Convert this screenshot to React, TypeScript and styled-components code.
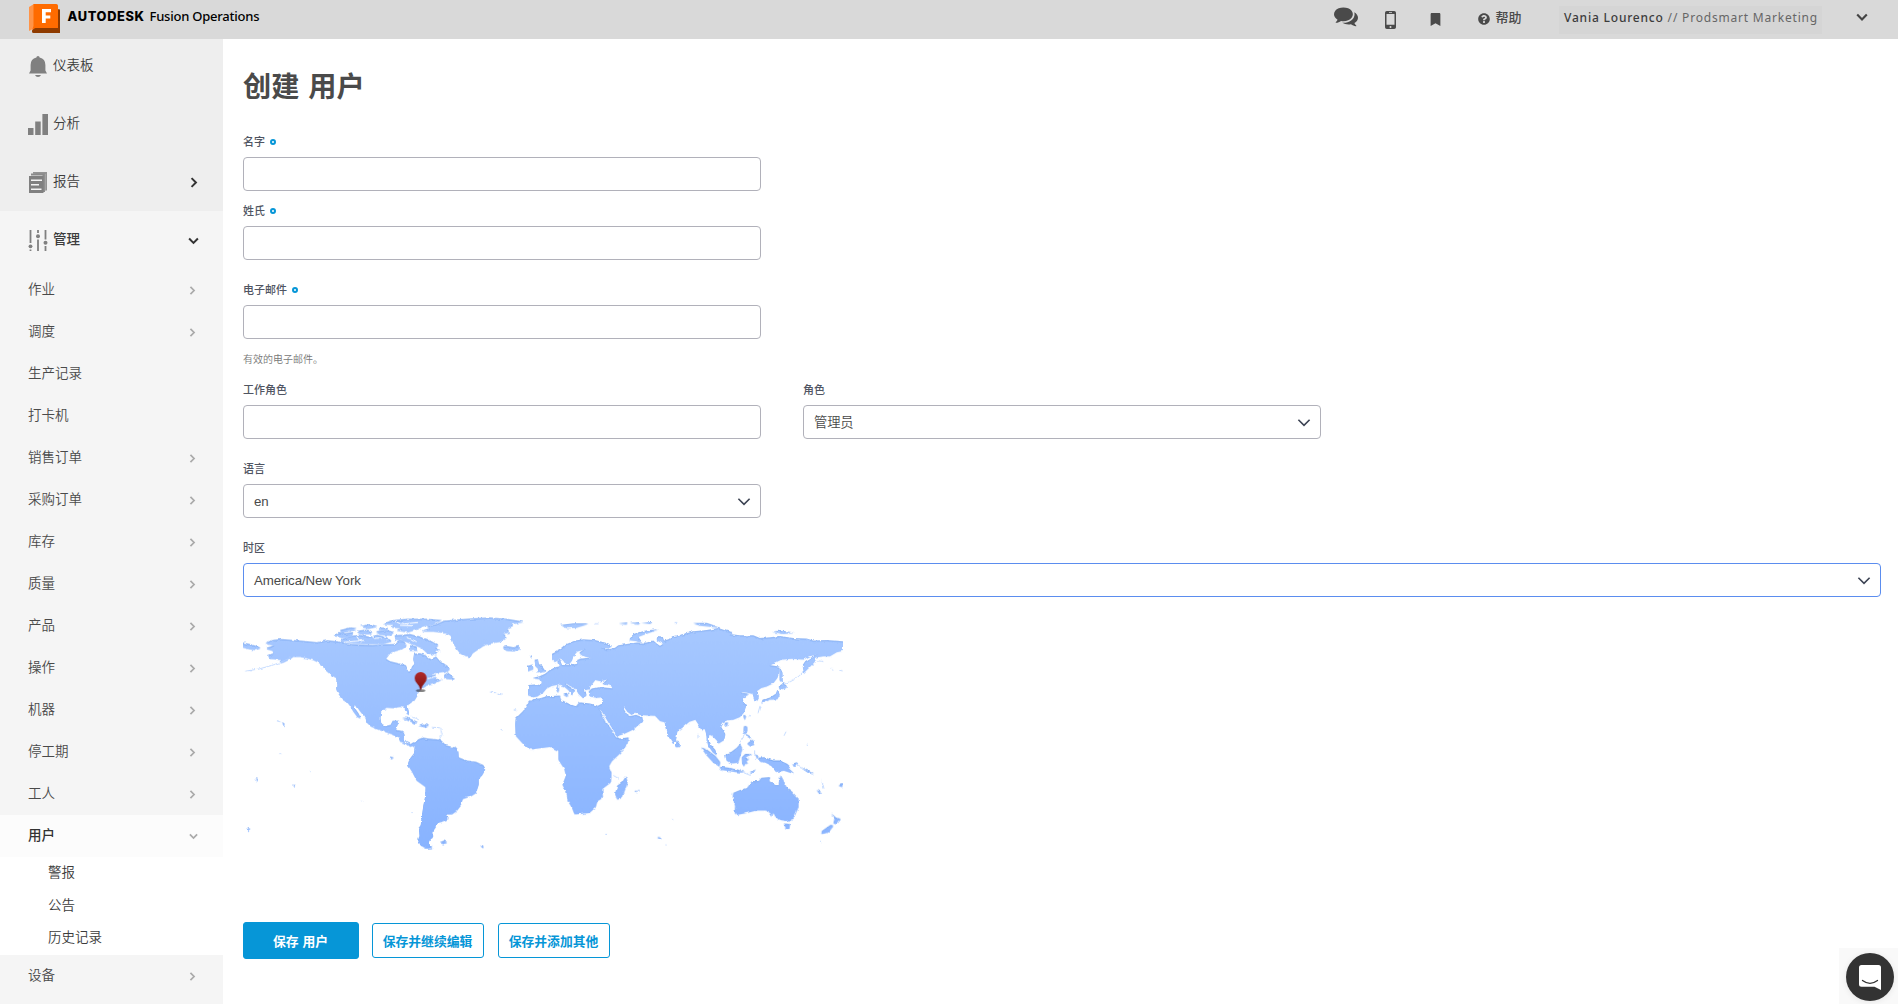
import React from 'react';
import styled, { createGlobalStyle } from 'styled-components';
import { FaBookmark, FaQuestionCircle } from 'react-icons/fa';

const cjk = `"Noto Sans CJK SC", sans-serif`;

const GlobalStyle = createGlobalStyle`
  *, *::before, *::after { box-sizing: border-box; }
  body {
    margin: 0;
    background: #fff;
    color: #4a4a4a;
    font-family: "Liberation Sans", ${cjk};
    overflow: hidden;
  }
`;

const Page = styled.div`
  display: flex;
  flex-direction: column;
  width: 100%;
  height: 1004px;
  overflow: hidden;
`;

/* ---------- Header ---------- */

const Header = styled.header`
  display: flex;
  align-items: center;
  justify-content: space-between;
  flex: none;
  height: 39px;
  padding: 0 30px 0 28px;
  background: #d9d9d9;
`;

const Brand = styled.div`
  display: flex;
  align-items: center;
  height: 39px;
  padding-bottom: 2px;
`;

const BrandName = styled.span`
  width: 82px;
  margin: -4px 0 0 6.5px;
  color: #000;
  font: 800 12.8px/18px Inter, sans-serif;
  letter-spacing: 0.65px;
`;

const ProductName = styled.span`
  margin: -5px 0 0 0;
  color: #000;
  font: 500 13px/18px "Noto Sans", sans-serif;
  letter-spacing: -0.22px;
`;

const HeaderTools = styled.div`
  display: flex;
  align-items: center;
  height: 39px;
  color: #4a4a4a;
`;

const ToolIcon = styled.span<{ $gap: number; $drop?: number }>`
  display: flex;
  margin: ${(p) => p.$drop ?? 0}px ${(p) => p.$gap}px 0 0;
`;

const HelpText = styled.span`
  margin: -6px 37.5px 0 0;
  font: 500 13px/20px ${cjk};
`;

const Account = styled.div`
  display: flex;
  align-items: center;
  width: 263px;
  height: 28px;
  margin-right: 34px;
  padding: 0 0 3px 5px;
  background: #d5d5d5;
  color: #666;
  font: 400 12px/18px "Noto Sans", sans-serif;
  letter-spacing: 0.8px;
  white-space: pre;
`;

const AccountName = styled.span`
  color: #3c3c3c;
  font-weight: 500;
`;

/* ---------- Sidebar ---------- */

const Body = styled.div`
  display: flex;
  flex: 1;
  min-height: 0;
`;

const Sidebar = styled.nav`
  flex: none;
  width: 223px;
  background: #f5f5f5;
  font-family: ${cjk};
  font-size: 13.5px;
  overflow: hidden;
`;

const MainItems = styled.div`
  background: #eee;
  & > :first-child { height: 56px; padding-bottom: 6px; }
`;

const MainItem = styled.div<{ $open?: boolean }>`
  display: grid;
  grid-template-columns: 25px 1fr 12px;
  align-items: center;
  justify-items: start;
  height: 58px;
  padding: 0 23.5px 4px 28px;
  color: #3c3c3c;
  font-weight: ${(p) => (p.$open ? 500 : 350)};
  svg { margin-top: 5px; }
  svg:last-child:not(:first-child) { justify-self: center; }
`;

const SubItem = styled.div<{ $open?: boolean }>`
  display: flex;
  align-items: center;
  justify-content: space-between;
  height: 42px;
  padding: 0 ${(p) => (p.$open ? 25 : 29)}px 4px 28px;
  background: ${(p) => (p.$open ? '#fcfcfc' : 'transparent')};
  color: ${(p) => (p.$open ? '#333' : '#4a4a4a')};
  font-weight: ${(p) => (p.$open ? 500 : 350)};
  svg { margin-top: 5px; }
`;

const LeafGroup = styled.div`
  height: 98px;
  background: #fff;
`;

const Leaf = styled.div`
  height: 32.6px;
  padding-left: 48px;
  color: #3c3c3c;
  font-weight: 350;
  line-height: 28px;
`;

/* ---------- Form ---------- */

const Main = styled.main`
  display: flex;
  flex-direction: column;
  flex: 1;
  padding: 30px 17px 0 20px;
`;

const Title = styled.h1`
  margin: 0;
  color: #4a4a4a;
  font: 700 28.2px/32px ${cjk};
  height: 34px;
  word-spacing: 2.5px;
`;

const Field = styled.div<{ $top: number; $wide?: boolean }>`
  width: ${(p) => (p.$wide ? '100%' : '518px')};
  margin-top: ${(p) => p.$top}px;
`;

const Label = styled.label`
  display: flex;
  align-items: center;
  height: 16px;
  margin-bottom: 7px;
  color: #505562;
  font: 500 11px/16px ${cjk};
`;

const LabelText = styled.span`
  margin-top: -2px;
`;

const Required = styled.i`
  width: 6px;
  height: 6px;
  margin-left: 5px;
  border: 2px solid #0696d7;
  border-radius: 50%;
`;

const Control = styled.div<{ $focus?: boolean }>`
  display: flex;
  align-items: center;
  justify-content: space-between;
  height: 34px;
  padding: 1px 9px 0 10px;
  border: 1px solid ${(p) => (p.$focus ? '#5b8def' : '#b1b1ba')};
  border-radius: 4px;
  background: #fff;
  color: #4a4a4a;
  font: 350 13.3px/20px "Liberation Sans", ${cjk};
  letter-spacing: -0.12px;
`;

const Help = styled.p`
  height: 16px;
  margin: 12px 0 0;
  color: #777;
  font: 350 10px/16px ${cjk};
`;

const FieldRow = styled.div`
  display: flex;
  gap: 42px;
`;

const MapBox = styled.div`
  width: 600px;
  height: 300px;
  margin-top: 11px;
`;

const Actions = styled.div`
  display: flex;
  align-items: center;
  margin-top: 14px;
`;

const Button = styled.button<{ $primary?: boolean }>`
  display: flex;
  align-items: center;
  justify-content: center;
  width: ${(p) => (p.$primary ? 116 : 112)}px;
  height: ${(p) => (p.$primary ? 37 : 35)}px;
  margin: 0 ${(p) => (p.$primary ? 13 : 14)}px 0 0;
  padding: 0 1px 0 0;
  border: 1px solid #0696d7;
  border-radius: 3px;
  background: ${(p) => (p.$primary ? '#0696d7' : '#fff')};
  color: ${(p) => (p.$primary ? '#fff' : '#0696d7')};
  font: 700 12.8px/18px ${cjk};
  word-spacing: 1px;
  white-space: nowrap;
`;

const Launcher = styled.div`
  position: absolute;
  left: 1839px;
  top: 948px;
  display: flex;
  align-items: center;
  justify-content: center;
  width: 59px;
  height: 56px;
  padding: 2px 0 0 3px;
  background: #f9f9f9;
`;

const LauncherDisc = styled.div`
  display: flex;
  align-items: center;
  justify-content: center;
  flex: none;
  width: 48px;
  height: 48px;
  border-radius: 50%;
  background: #333;
  box-shadow: 0 1px 6px rgba(0, 0, 0, 0.08);
`;

/* ---------- Icons ---------- */

const Chevron = ({ down, color, size, weight }: { down?: boolean; color: string; size: number; weight: number }) => (
  <svg
    width={down ? size * 2 : size}
    height={down ? size : size * 2}
    viewBox={down ? '0 0 20 10' : '0 0 10 20'}
    fill="none"
    stroke={color}
    strokeWidth={weight}
    overflow="visible"
  >
    <path d={down ? 'M2 1l8 8 8-8' : 'M1 2l8 8-8 8'} />
  </svg>
);

const BrandMark = () => (
  <svg width="33" height="29" viewBox="0 0 33 29">
    <path d="M1 3L6 0v24.500L1 27z" fill="#ff9448" />
    <path d="M4 26.500L7 23h22V5l3 .5V29H5.500Q4 29 4 27.500z" fill="#8f3b00" />
    <path d="M5.500 0h22.700Q30 0 30 1.800V24H7.500Q5 24.500 4 26.500L5.500 22z" fill="#ff6b00" />
    <path d="M14 5h9v3.200h-5.300v3.200h4.600v3.100h-4.600V19H14z" fill="#fff" />
  </svg>
);

const CommentsIcon = () => (
  <svg width="24" height="24" viewBox="0 0 1792 1792" fill="#4a4a4a">
    <path d="M1408 768q0 139-94 257t-256.500 186.500-353.500 68.500q-86 0-176-16-124 88-278 128-36 9-86 16h-3q-11 0-20.500-8t-11.500-21q-1-3-1-6.500t.5-6.500 2-6l2.500-5 3.500-5.500 4-5 4.500-5 4-4.500q5-6 23-25t26-29.500 22.500-29 25-38.500 20.500-44q-124-72-195-177t-71-224q0-139 94-257t256.500-186.500 353.500-68.500 353.500 68.500 256.500 186.500 94 257zm384 256q0 120-71 224.500t-195 176.500q10 24 20.500 44t25 38.500 22.500 29 26 29.500 23 25q1 1 4 4.500t4.500 5 4 5 3.500 5.500l2.500 5 2 6 .5 6.500-1 6.500q-3 14-13 22t-22 7q-50-7-86-16-154-40-278-128-90 16-176 16-271 0-472-132 58 4 88 4 161 0 309-45t264-129q125-92 192-212t67-254q0-77-23-152 129 71 204 178t75 230z" />
  </svg>
);

const PhoneIcon = () => (
  <svg width="11" height="18" viewBox="0 0 11 18">
    <path
      fillRule="evenodd"
      fill="#4a4a4a"
      d="M1.800 0h7.400Q11 0 11 1.800v14.400Q11 18 9.200 18H1.800Q0 18 0 16.200V1.800Q0 0 1.800 0zM1.500 3v10.800h8V3zM4 1.200v.7h3v-.7zM5.500 15a1 1 0 1 0 0 2 1 1 0 0 0 0-2z"
    />
  </svg>
);

const BellIcon = () => (
  <svg width="20" height="22" viewBox="0 0 20 22" fill="#808080">
    <path d="M10 0q1.600 0 1.600 1.500 5.800 1.300 5.800 7.500v5.500l1.600 3H1l1.600-3V9Q2.600 2.800 8.400 1.500 8.400 0 10 0zM7 19h6q-.8 2-3 2t-3-2z" />
  </svg>
);

const BarsIcon = () => (
  <svg width="20" height="22" viewBox="0 0 20 22" fill="#808080">
    <path d="M0 14h5.500v7H0zM7.200 7.500h5.500V21H7.200zM14.400 0H20v21h-5.600z" />
  </svg>
);

const ReportIcon = () => (
  <svg width="20" height="22" viewBox="0 0 20 22">
    <path d="M5 1.800V0h14v18.500h-2.500V2.500z" fill="#949494" />
    <path d="M3 3.500V1.500h14V20h-2.500V3.500z" fill="#8a8a8a" />
    <path d="M17.300 2v17" stroke="#bdbdbd" strokeWidth="0.500" />
    <path d="M1 4h14.500v17H1z" fill="#808080" />
    <path d="M3 8.300h11M3 12.700h8M3 17.300h10.500" stroke="#f4f4f4" strokeWidth="1.400" />
  </svg>
);

const SlidersIcon = () => (
  <svg width="20" height="22" viewBox="0 0 20 22" fill="none" stroke="#808080" strokeWidth="1.800">
    <path d="M2.500 0v13M2.500 19.500V21M10 0v3M10 9.500V21M17.500 0v9.500M17.500 16v5" />
    <g fill="#808080" stroke="none">
      <circle cx="2.500" cy="16.300" r="1.900" />
      <circle cx="10" cy="6.300" r="2" />
      <circle cx="17.500" cy="12.800" r="2" />
    </g>
  </svg>
);

const LauncherIcon = () => (
  <svg width="22" height="25" viewBox="0 0 22 25">
    <path d="M2.500 0h17Q22 0 22 2.500V25l-6.500-3.200h-13Q0 21.800 0 19.300V2.500Q0 0 2.500 0z" fill="#fff" />
    <path d="M3.500 15.500q7.500 5.600 15 0" fill="none" stroke="#333" strokeWidth="1.300" strokeLinecap="round" />
  </svg>
);

/* ---------- World map ---------- */

const WEST_LAND = [
  'M9 128L30 132 45 137 62 143 48 148 30 146 9 140Z',
  'M76 130L95 120 125 117 160 120 195 123 232 127 262 121 290 124 310 127 335 132 360 134 400 135 430 133 465 132 478 122 492 124 500 136 486 146 470 150 455 154 447 162 437 176 450 184 475 190 498 196 503 210 512 213 516 200 524 192 520 178 522 162 540 160 556 166 572 178 588 170 600 184 618 198 630 207 615 216 595 219 575 221 560 230 572 226 588 226 583 238 606 238 582 250 560 256 550 262 540 270 531 276 533 285 524 300 508 310 502 316 505 330 508 345 500 340 494 322 480 319 460 323 440 322 424 332 421 355 424 372 436 380 452 376 458 364 478 364 470 380 468 392 488 394 494 406 490 420 500 430 512 434 522 428 528 434 518 438 508 440 494 428 480 424 476 412 460 403 435 395 415 388 392 378 380 366 376 352 360 332 350 318 340 314 345 326 356 342 362 355 352 350 340 334 330 316 322 306 308 298 298 284 289 268 290 240 288 232 272 222 256 208 248 196 236 186 220 178 200 172 178 168 160 168 150 176 130 186 118 188 125 178 108 176 90 174 84 166 100 160 98 150 76 144 92 140 104 134Z',
  'M524 430L535 420 548 415 566 418 590 420 604 424 618 438 645 444 655 456 656 474 680 484 708 488 730 498 736 508 728 524 716 538 716 556 708 580 695 588 668 598 664 616 650 634 636 644 620 644 626 658 606 666 594 670 588 682 576 700 580 712 568 724 564 736 578 746 560 748 542 738 532 720 536 712 534 690 542 680 546 650 550 620 556 590 557 562 530 542 516 515 504 496 510 478 522 462 524 444Z',
  'M545 92L570 84 560 78 590 72 612 62 650 58 700 54 750 52 800 56 850 64 812 70 820 78 800 86 808 94 790 100 800 112 784 122 750 128 730 136 712 148 698 158 690 172 676 168 660 158 650 144 640 128 632 104 610 96 580 92Z',
  'M788 142L800 138 820 142 836 138 840 146 820 152 800 150Z',
  'M428 70L460 60 500 56 560 56 606 60 580 70 550 76 530 86 505 94 470 90 486 82 455 80 462 72Z',
  'M284 106L296 96 316 100 340 96 336 106 310 112Z',
  'M300 90L330 82 350 84 330 92 304 96Z',
  'M304 118L330 108 360 104 384 110 410 104 440 112 455 122 430 130 380 130 340 128 310 124Z',
  'M350 92L380 88 398 94 388 100 360 100Z',
  'M360 78L390 72 412 78 386 84Z',
  'M408 94L440 90 462 96 450 104 420 102Z',
  'M420 82L446 84 440 89 416 88Z',
  'M464 106L490 104 510 102 540 110 564 118 596 136 585 140 602 152 584 148 590 164 560 156 545 142 520 132 500 124 486 120 466 116Z',
  'M510 136L530 140 532 150 512 150Z',
  'M612 226L626 216 634 228 646 236 630 236 614 234Z',
  'M486 355L505 355 520 362 534 368 524 370 506 361Z',
  'M534 377L550 372 568 378 558 382Z',
  'M600 730L612 726 622 730 610 734Z',
  'M720 739L730 741 730 747Z',
  'M126 368L134 372 132 378Z',
  'M448 472L462 474 454 478Z',
  'M43 538L54 539 50 543ZM156 557L166 559 162 563ZM22 688L32 690 26 694Z',
  'M884 180L894 178 896 192 908 202 916 214 888 218 896 206 886 196Z',
  'M864 198L878 194 880 206 864 212Z',
  'M870 170L876 166 876 172Z',
];

const EAST_LAND = [
  'M-35 256L-10 254 0 256 3 246-2 236-22 234-2 230 15 222 30 210 48 202 58 200 52 184 60 180 66 196 90 196 112 192 112 180 125 176 158 172 130 166 118 158 135 146 112 152 100 166 96 180 88 190 78 192 70 180 60 176 45 184 36 176 36 162 60 150 80 132 105 122 130 118 165 120 195 128 216 136 205 144 180 140 200 150 225 144 235 136 260 132 290 128 320 128 340 122 352 132 360 138 372 130 350 118 352 108 368 110 372 122 385 118 400 108 430 102 460 94 500 90 535 84 560 92 578 96 570 102 600 106 640 106 660 114 690 112 720 108 760 114 800 116 820 122 860 120 909 124 909 150 890 154 870 166 850 166 826 170 824 184 808 200 792 216 788 196 796 184 815 172 830 160 810 166 790 176 755 174 725 176 705 186 688 196 718 200 718 215 712 232 700 248 680 258 664 262 650 272 656 288 654 300 642 298 638 280 620 276 600 274 612 280 628 282 610 290 608 300 618 318 612 336 600 350 580 358 562 360 548 366 540 376 548 390 556 404 552 420 536 430 530 420 518 408 508 402 506 420 514 438 526 452 530 466 518 456 504 436 500 410 496 390 484 390 478 376 466 358 448 364 430 380 412 394 408 420 400 432 390 416 378 392 374 366 360 362 345 346 300 344 285 336 275 344 262 334 252 320 248 324 260 342 272 350 288 346 308 354 306 364 280 388 250 402 230 408 222 392 205 366 186 334 172 320 186 312 190 290 170 292 150 288 146 274 150 268 180 262 218 266 214 256 190 250 205 236 182 242 166 238 152 256 148 266 130 270 140 284 130 294 116 280 106 264 90 256 75 246 84 258 106 272 100 276 96 286 86 270 70 256 56 252 35 256 20 264 10 276-8 288-20 290-36 284Z',
  'M-18 298L0 296 20 290 60 288 62 300 90 314 108 320 118 308 150 312 172 318 180 332 196 364 214 390 228 414 240 418 266 414 262 432 240 460 215 484 206 500 214 520 212 548 186 568 188 594 172 604 166 624 148 640 104 644 96 624 84 604 80 578 68 556 78 530 74 508 56 480 56 452 30 440 0 444-28 448-50 432-72 408-74 374-72 356-50 334-36 310-25 300Z',
  'M258 532L262 550 246 594 232 600 226 584 232 560 246 550Z',
  'M410 422L420 436 414 442 408 438Z',
  'M484 444L500 450 526 470 540 488 538 500 520 488 500 466Z',
  'M538 502L570 506 600 514 616 518 590 517 545 510Z',
  'M556 464L574 458 590 446 600 434 606 446 600 470 594 488 574 490 560 482Z',
  'M606 474L616 464 634 464 620 470 614 478 628 478 618 484 624 494 616 490 612 500 607 492Z',
  'M612 380L620 380 622 392 616 402 630 410 634 418 620 408 611 398Z',
  'M622 432L638 420 642 438 632 440Z',
  'M644 464L656 470 648 476 672 474 700 484 720 484 742 494 752 504 742 504 762 522 732 512 708 516 694 498 674 488 660 484Z',
  'M756 494L772 488 766 498Z',
  'M626 520L648 510 640 518Z',
  'M780 502L800 512 822 524 806 520Z',
  'M830 572L846 580 838 582ZM896 558L908 554 906 562Z',
  'M580 582L598 574 622 566 636 546 656 546 664 536 690 534 688 546 706 558 716 558 722 528 732 546 740 566 756 578 776 600 776 622 760 658 740 664 716 660 706 650 700 640 696 652 690 640 678 632 650 632 620 640 590 646 584 640 586 620 578 600Z',
  'M732 674L750 676 748 688 738 688Z',
  'M874 644L888 656 902 660 890 674 880 672 884 660Z',
  'M872 678L880 680 866 698 844 704 846 696Z',
  'M716 260L730 250 742 260 720 268Z',
  'M712 270L719 284 712 296 690 298 664 310 668 300 690 294 708 282Z',
  'M719 200L727 218 728 248 719 240Z',
  'M610 346L618 348 614 360Z',
  'M552 370L564 368 560 380Z',
  'M268 118L280 102 310 92 354 87 320 98 294 108 304 124 286 120Z',
  'M64 74L100 70 145 70 110 80 80 82Z',
  'M460 68L500 68 540 82 514 78 480 74Z',
  'M236 69L262 67 260 71ZM270 68L300 66 296 71ZM304 66L336 66 330 69Z',
  'M696 93L724 92 762 97 730 99Z',
  'M50 262L56 256 56 274 50 276ZM70 284L84 282 82 290Z',
  'M352 715L362 716 358 721ZM284 576L290 574 288 580ZM294 572L299 573 296 576Z',
];

const FINE_COAST =
  'M16 213Q60 208 100 194T150 172M30 212l4 0M110 362l14 4M516 348l20 12M576 382l24 2M602 384l4 20-8 14M750 276l18 2M772 282l12 2M208 514l4 4M118 462l5 0M362 606l4 0M514 640l4 0M782 388l6 4M822 328l6 2';
const FINE_COAST_EAST =
  'M732 252Q770 240 788 216M826 180l24 4M870 206l10 4M898 210l10 2M660 318l-6 22M630 346l-4 4M474 402l0 14M500 412l0 18M644 452l0 16M612 520l20 8M548 514l-12-4M846 544l6 24M770 496l14 10M220 528l14 8M738 396l-6 12M800 436l4 1M396 662l4 0M196 706l6 0M376 738l4 0M840 726l4 2M404 66l8 0M164 70l12 0M600 428l14-22';

const Land = ({ fill, dy }: { fill: string; dy: number }) => (
  <g fill={fill} transform={`translate(0 ${dy})`}>
    {WEST_LAND.map((d) => (
      <path key={d} d={d} />
    ))}
    {EAST_LAND.map((d) => (
      <path key={d} d={d} transform="translate(900 0)" />
    ))}
  </g>
);

const WorldMap = () => (
  <svg width="600" height="300" viewBox="9 24 1800 900">
    <defs>
      <linearGradient id="land" gradientUnits="userSpaceOnUse" x1="0" y1="50" x2="0" y2="750">
        <stop offset="0" stopColor="#a8c9ff" />
        <stop offset="1" stopColor="#88b3ff" />
      </linearGradient>
      <linearGradient id="pin" x1="0" y1="0" x2="0" y2="1">
        <stop offset="0" stopColor="#b02a2a" />
        <stop offset="1" stopColor="#7d1212" />
      </linearGradient>
      <filter id="coast" filterUnits="userSpaceOnUse" x="9" y="24" width="1800" height="900">
        <feTurbulence type="fractalNoise" baseFrequency="0.07" numOctaves="3" seed="4" result="n" />
        <feDisplacementMap in="SourceGraphic" in2="n" scale="9" xChannelSelector="R" yChannelSelector="G" />
      </filter>
    </defs>
    <g filter="url(#coast)">
      <g transform="translate(0 2) scale(1 0.993)">
        <Land fill="#7fabf3" dy={-1} />
        <Land fill="url(#land)" dy={2} />
        <g fill="none" stroke="#b9d3ff" strokeWidth="2.500">
          <path d={FINE_COAST} />
          <path d={FINE_COAST_EAST} transform="translate(900 0)" />
        </g>
        <g fill="none" stroke="#fff" strokeWidth="3">
          <path d="M350 108l14 20M392 104l12 10 20-2M464 62l30 8 40-4M480 74l36 2M500 110l30 14M312 126l60-6M440 120l14-12" />
          <path d="M560 236l30-8M540 252l16-8" />
        </g>
      </g>
    </g>
    <ellipse cx="542" cy="272" rx="14" ry="4" fill="#222" opacity="0.55" />
    <path d="M542 272Q538 256 530 249 524 242 524 234A18 18 0 0 1 560 234Q560 242 554 249 546 256 542 272Z" fill="url(#pin)" />
  </svg>
);

/* ---------- Page ---------- */

const subItems: [string, boolean][] = [
  ['作业', true],
  ['调度', true],
  ['生产记录', false],
  ['打卡机', false],
  ['销售订单', true],
  ['采购订单', true],
  ['库存', true],
  ['质量', true],
  ['产品', true],
  ['操作', true],
  ['机器', true],
  ['停工期', true],
  ['工人', true],
];

const SelectArrow = () => <Chevron down color="#3c4353" size={7} weight={2.3} />;

export default function App() {
  return (
    <Page>
      <GlobalStyle />
      <Header>
        <Brand>
          <BrandMark />
          <BrandName>AUTODESK</BrandName>
          <ProductName>Fusion Operations</ProductName>
        </Brand>
        <HeaderTools>
          <ToolIcon $gap={27} $drop={-8}><CommentsIcon /></ToolIcon>
          <ToolIcon $gap={33} $drop={1}><PhoneIcon /></ToolIcon>
          <ToolIcon $gap={36} $drop={-1}><FaBookmark size={13} /></ToolIcon>
          <ToolIcon $gap={5} $drop={-1}><FaQuestionCircle size={12} /></ToolIcon>
          <HelpText>帮助</HelpText>
          <Account>
            <AccountName>Vania Lourenco</AccountName> // Prodsmart Marketing
          </Account>
          <ToolIcon $gap={0} $drop={-5}><Chevron down color="#444" size={6} weight={3.6} /></ToolIcon>
        </HeaderTools>
      </Header>
      <Body>
        <Sidebar>
          <MainItems>
            <MainItem><BellIcon />仪表板</MainItem>
            <MainItem><BarsIcon />分析</MainItem>
            <MainItem><ReportIcon />报告<Chevron color="#333" size={5.5} weight={3.6} /></MainItem>
          </MainItems>
          <MainItem $open><SlidersIcon />管理<Chevron down color="#333" size={5.5} weight={3.6} /></MainItem>
          {subItems.map(([name, nested]) => (
            <SubItem key={name}>
              {name}
              {nested && <Chevron color="#aaa" size={4.5} weight={3.8} />}
            </SubItem>
          ))}
          <SubItem $open>用户<Chevron down color="#aaa" size={4.5} weight={3.8} /></SubItem>
          <LeafGroup>
            <Leaf>警报</Leaf>
            <Leaf>公告</Leaf>
            <Leaf>历史记录</Leaf>
          </LeafGroup>
          <SubItem>设备<Chevron color="#aaa" size={4.5} weight={3.8} /></SubItem>
        </Sidebar>
        <Main>
          <Title>创建 用户</Title>
          <Field $top={31}>
            <Label><LabelText>名字</LabelText><Required /></Label>
            <Control />
          </Field>
          <Field $top={12}>
            <Label><LabelText>姓氏</LabelText><Required /></Label>
            <Control />
          </Field>
          <Field $top={22}>
            <Label><LabelText>电子邮件</LabelText><Required /></Label>
            <Control />
            <Help>有效的电子邮件。</Help>
          </Field>
          <FieldRow>
            <Field $top={15}>
              <Label><LabelText>工作角色</LabelText></Label>
              <Control />
            </Field>
            <Field $top={15}>
              <Label><LabelText>角色</LabelText></Label>
              <Control>管理员<SelectArrow /></Control>
            </Field>
          </FieldRow>
          <Field $top={22}>
            <Label><LabelText>语言</LabelText></Label>
            <Control>en<SelectArrow /></Control>
          </Field>
          <Field $top={22} $wide>
            <Label><LabelText>时区</LabelText></Label>
            <Control $focus>America/New York<SelectArrow /></Control>
          </Field>
          <MapBox><WorldMap /></MapBox>
          <Actions>
            <Button $primary>保存 用户</Button>
            <Button>保存并继续编辑</Button>
            <Button>保存并添加其他</Button>
          </Actions>
        </Main>
      </Body>
      <Launcher>
        <LauncherDisc><LauncherIcon /></LauncherDisc>
      </Launcher>
    </Page>
  );
}
